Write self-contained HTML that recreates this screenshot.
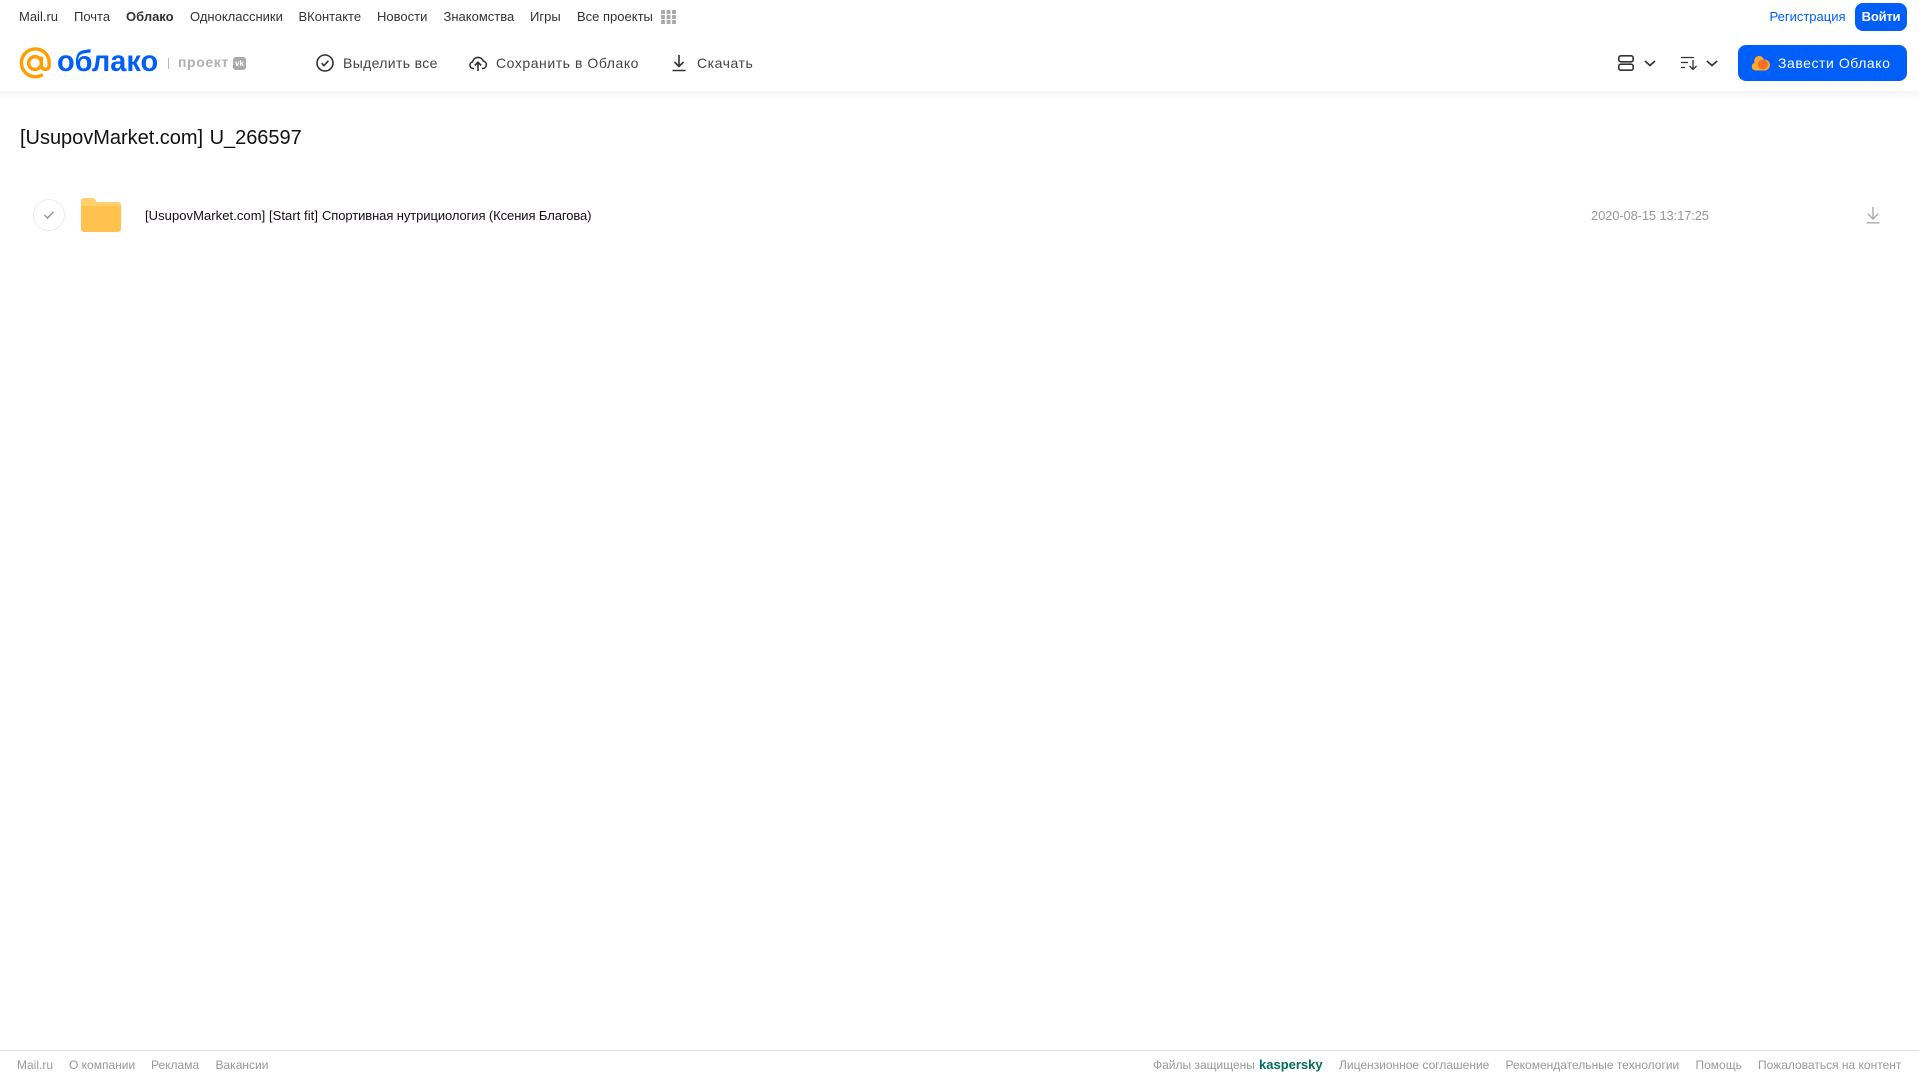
<!DOCTYPE html>
<html lang="ru"><head><meta charset="utf-8"><title>Облако</title>
<style>
html,body{margin:0;padding:0;width:1919px;height:1079px;overflow:hidden;background:#fff;font-family:"Liberation Sans",sans-serif}
.t{position:absolute;white-space:nowrap;line-height:16px;height:16px}
.n{top:9px;font-size:13px;color:#333}
.tb{top:55px;font-size:14px;color:#444;letter-spacing:.55px}
.f{top:1057px;font-size:12px;color:#999}
svg{position:absolute;overflow:visible}
</style></head><body>
<div style="position:absolute;left:0;top:91px;width:1919px;height:9px;background:linear-gradient(#f5f5f5,#fff)"></div>

<span class="t n" style="left:19px">Mail.ru</span>
<span class="t n" style="left:74px">Почта</span>
<span class="t n" style="left:126px;font-weight:bold">Облако</span>
<span class="t n" style="left:190px">Одноклассники</span>
<span class="t n" style="left:298.500px">ВКонтакте</span>
<span class="t n" style="left:377px">Новости</span>
<span class="t n" style="left:443.500px">Знакомства</span>
<span class="t n" style="left:530px">Игры</span>
<span class="t n" style="left:577px">Все проекты</span>
<svg style="left:661px;top:10px" width="15" height="14" fill="#aaa"><rect width="4" height="4" rx=".8"/><rect x="5.500" width="4" height="4" rx=".8"/><rect x="11" width="4" height="4" rx=".8"/><rect y="5" width="4" height="4" rx=".8"/><rect x="5.500" y="5" width="4" height="4" rx=".8"/><rect x="11" y="5" width="4" height="4" rx=".8"/><rect y="10" width="4" height="4" rx=".8"/><rect x="5.500" y="10" width="4" height="4" rx=".8"/><rect x="11" y="10" width="4" height="4" rx=".8"/></svg>

<span class="t n" style="left:1769.500px;color:#005ff9">Регистрация</span>
<div style="position:absolute;left:1855px;top:3px;width:52px;height:28px;border-radius:8px;background:#005ff9;color:#fff;font-size:13px;font-weight:bold;line-height:27px;text-align:center;letter-spacing:-.2px">Войти</div>

<svg style="left:19px;top:47px" width="33" height="32" viewBox="0 0 32 32" fill="none" stroke="#ff9e00" stroke-width="3.400"><circle cx="15.500" cy="16" r="6.400"/><path d="M21.900 9.600V18.500a3.900 3.900 0 0 0 7.800 0V16A13.900 13.900 0 1 0 23.200 27.600"/></svg>
<span class="t" style="left:57px;top:44px;height:36px;line-height:36px;font-size:30px;font-weight:bold;color:#005ff9;transform:scaleX(.965);transform-origin:0 50%">облако</span>
<div style="position:absolute;left:168px;top:58px;width:1px;height:11px;background:#bbb"></div>
<span class="t" style="left:178px;top:54px;font-size:14px;font-weight:bold;color:#b0b0b0;letter-spacing:.6px">проект</span>
<div style="position:absolute;left:233px;top:57px;width:13px;height:13px;border-radius:3px;background:#aaa;color:#fff;font-size:8px;font-weight:bold;line-height:13px;text-align:center">vk</div>

<svg style="left:316px;top:54px" width="18" height="18" fill="none" stroke="#333" stroke-width="1.600"><circle cx="9" cy="9" r="8"/><path d="M5.600 9.200l2.400 2.400 4.400-4.800"/></svg>
<span class="t tb" style="left:343px;letter-spacing:.35px">Выделить все</span>
<svg style="left:469px;top:54px" width="18" height="18" fill="none" stroke="#333" stroke-width="1.600"><path d="M5 14.500H4a3.400 3.400 0 0 1-.4-6.700A5.600 5.600 0 0 1 14.300 7a3.800 3.800 0 0 1-.3 7.500h-1"/><path d="M9 17V8.500M5.800 11.500L9 8.300l3.200 3.200"/></svg>
<span class="t tb" style="left:496px">Сохранить в Облако</span>
<svg style="left:671px;top:54px" width="16" height="18" fill="none" stroke="#333" stroke-width="1.600"><path d="M8 1v11M3.500 8L8 12.500 12.500 8M1.500 16.500h13"/></svg>
<span class="t tb" style="left:697px">Скачать</span>

<svg style="left:1618px;top:55px" width="16" height="16" fill="none" stroke="#333" stroke-width="1.600"><rect x=".8" y=".8" width="14.400" height="6" rx="2"/><rect x=".8" y="9.200" width="14.400" height="6" rx="2"/></svg>
<svg style="left:1644px;top:60px" width="12" height="7" fill="none" stroke="#333" stroke-width="1.700"><path d="M1 1l5 4.500L11 1"/></svg>
<svg style="left:1681px;top:56px" width="16" height="14" fill="none" stroke="#333" stroke-width="1.300"><path d="M0 1.500h13M0 6.500h7M0 11.500h4M12 4v9M8.500 10l3.500 3.500 3.500-3.500"/></svg>
<svg style="left:1706px;top:60px" width="12" height="7" fill="none" stroke="#333" stroke-width="1.700"><path d="M1 1l5 4.500L11 1"/></svg>

<div style="position:absolute;left:1738px;top:45px;width:169px;height:36px;border-radius:8px;background:#005ff9"></div>
<svg style="left:1750.500px;top:55px" width="19" height="16"><path d="M4.500 15.500A4 4 0 0 1 3.500 7.700 5 5 0 0 1 8 1a5 5 0 0 1 4.800 3.500A5.500 5.500 0 0 1 14 15.500z" fill="#ffa930"/><circle cx="12" cy="9.500" r="5" fill="#f4702a"/></svg>
<span class="t" style="left:1778px;top:55px;font-size:14px;color:#fff;letter-spacing:.55px">Завести Облако</span>

<span class="t" style="left:20px;top:126px;height:24px;line-height:24px;font-size:20px;color:#111;word-spacing:1px;letter-spacing:-.02px">[UsupovMarket.com] U_266597</span>

<div style="position:absolute;left:33px;top:199px;width:30px;height:30px;border:1px solid #ececec;border-radius:50%"></div>
<svg style="left:44px;top:211px" width="10" height="8" fill="none" stroke="#999" stroke-width="1.500"><path d="M.5 4l3 3L9.500 .8"/></svg>
<svg style="left:81px;top:198px" width="40" height="34"><path d="M0 3a3 3 0 0 1 3-3h8a4 4 0 0 1 3 1.500L16 4h21a3 3 0 0 1 3 3v24a3 3 0 0 1-3 3H3a3 3 0 0 1-3-3z" fill="#ffc24f"/><path d="M0 8h40V7a3 3 0 0 0-3-3H16l-2-2.500A4 4 0 0 0 11 0H3a3 3 0 0 0-3 3z" fill="#ffd06b"/></svg>
<span class="t" style="left:145px;top:208px;font-size:13px;color:#1a0a1a;letter-spacing:.06px">[UsupovMarket.com] [Start fit]</span>
<span class="t" style="left:322px;top:208px;font-size:13px;color:#1a0a1a;letter-spacing:-.09px">Спортивная нутрициология (Ксения Благова)</span>
<span class="t" style="left:1591px;top:208px;font-size:13px;color:#999;letter-spacing:-.15px">2020-08-15 13:17:25</span>
<svg style="left:1866px;top:207px" width="14" height="17" fill="none" stroke="#aaa" stroke-width="1.400"><path d="M7 0v11.500M2 7l5 5 5-5M.5 15.800h13"/></svg>

<div style="position:absolute;left:0;top:1050px;width:1919px;height:1px;background:#ddd"></div>
<span class="t f" style="left:17px">Mail.ru</span>
<span class="t f" style="left:69px">О компании</span>
<span class="t f" style="left:151px">Реклама</span>
<span class="t f" style="left:215.500px">Вакансии</span>
<span class="t f" style="left:1153px">Файлы защищены</span>
<span class="t f" style="left:1259px;color:#006d5c;font-weight:bold;font-size:13px">kaspersky</span>
<span class="t f" style="left:1339px">Лицензионное соглашение</span>
<span class="t f" style="left:1505.500px">Рекомендательные технологии</span>
<span class="t f" style="left:1695.500px">Помощь</span>
<span class="t f" style="left:1758px">Пожаловаться на контент</span>
</body></html>
